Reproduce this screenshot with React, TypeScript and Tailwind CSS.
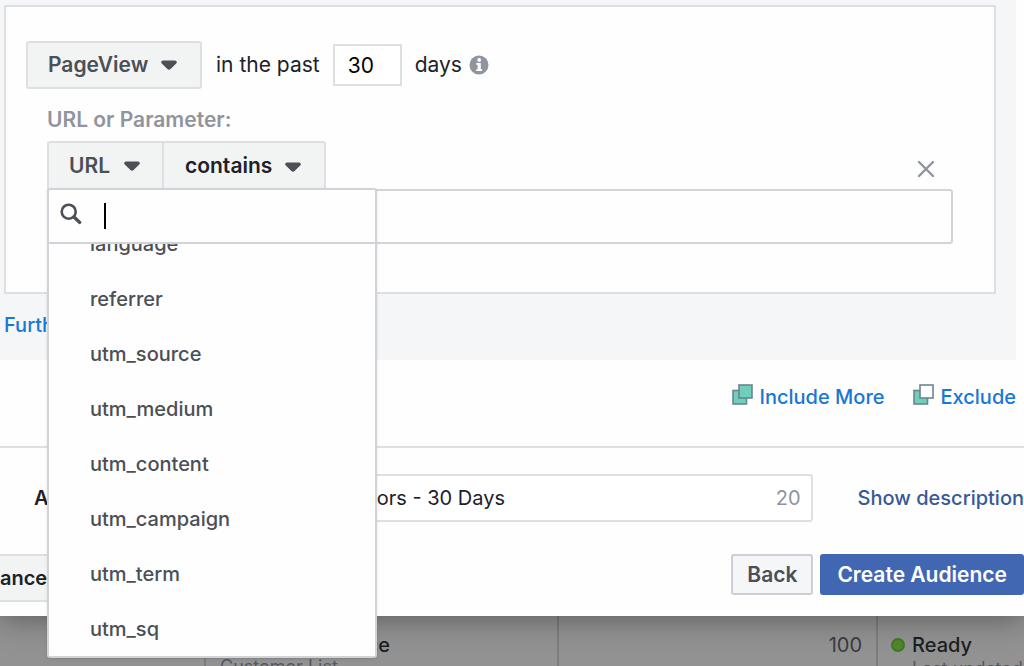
import { useState } from 'react';

const parameters = [
  'language',
  'referrer',
  'utm_source',
  'utm_medium',
  'utm_content',
  'utm_campaign',
  'utm_term',
  'utm_sq',
];

function Caret() {
  return (
    <svg className="h-[10px] w-[16px] shrink-0" viewBox="0 0 16 10" aria-hidden="true">
      <path
        d="M2 0.5h12c1.7 0 2.3 1.8 1.2 3L9.6 9c-.9.9-2.3.9-3.2 0L.8 3.5C-.3 2.3.3.5 2 .5z"
        fill="#4b4f56"
      />
    </svg>
  );
}

function InfoIcon() {
  return (
    <svg className="h-5 w-5" viewBox="0 0 20 20" aria-hidden="true">
      <circle cx="10" cy="10" r="9.5" fill="#90949c" />
      <circle cx="10.2" cy="5" r="1.9" fill="#fff" />
      <path d="M7.2 8h4.6v6.2h1.4V16H7.2v-1.8h1.4V9.8H7.2z" fill="#fff" />
    </svg>
  );
}

function SearchIcon() {
  return (
    <svg className="h-[22px] w-[22px] shrink-0" viewBox="0 0 22 22" fill="none" stroke="#4b4f56" aria-hidden="true">
      <circle cx="8.7" cy="8.7" r="7" strokeWidth="2.6" />
      <path d="M14 14l5.6 5.4" strokeWidth="3.4" strokeLinecap="round" />
    </svg>
  );
}

function SquaresIcon({ front }: { front: string }) {
  return (
    <svg className="mb-1.5 h-[21px] w-[21px]" viewBox="0 0 21 21" stroke="#6b8592" strokeWidth="1.6" aria-hidden="true">
      <rect x="1" y="6.5" width="13.5" height="13.5" fill="#6fcfbb" />
      <rect x="7" y="1" width="13" height="13" fill={front} />
    </svg>
  );
}

function ParameterMenu() {
  const [query, setQuery] = useState('');
  const items = parameters.filter((name) => name.includes(query));

  return (
    <div className="absolute top-full left-0 z-10 -mt-px w-[330px] rounded-[3px] border-2 border-[#d0d3d8] bg-[#fefefe] shadow-sm">
      <label className="flex h-[54px] items-center border-b-2 border-[#d0d3d8] pl-[11px]">
        <span className="mb-1">
          <SearchIcon />
        </span>
        <span className="ml-[22px] h-[26px] w-[2px] bg-black" />
        <input
          type="text"
          aria-label="Search parameters"
          value={query}
          onChange={(e) => setQuery(e.target.value)}
          className="min-w-0 flex-1 bg-transparent caret-transparent outline-none"
        />
      </label>
      <ul
        role="listbox"
        aria-label="Parameters"
        className="flex h-[412px] flex-col justify-end overflow-hidden text-[20px] font-medium text-[#4b4f56]"
      >
        {items.map((name) => (
          <li
            key={name}
            role="option"
            aria-selected={false}
            className="flex h-[55px] shrink-0 items-center pl-[41px]"
          >
            {name}
          </li>
        ))}
      </ul>
    </div>
  );
}

function RuleCard() {
  return (
    <div className="mr-5 ml-1 border-2 border-[#dddfe2] bg-[#fefefe] pt-[34px] pr-[41px] pb-[48px] pl-5">
      <div className="flex items-center">
        <div className="relative flex items-center">
          <select
            aria-label="Event"
            className="h-12 w-[176px] appearance-none rounded-[3px] border-2 border-[#dddfe2] bg-[#f2f3f3] pl-5 font-semibold text-[#4b4f56]"
          >
            <option>PageView</option>
          </select>
          <span className="pointer-events-none absolute right-[25px]">
            <Caret />
          </span>
        </div>
        <label htmlFor="days" className="ml-[14px]">
          in the past
        </label>
        <input
          id="days"
          type="text"
          defaultValue="30"
          className="ml-[13px] h-[42px] w-[69px] border-2 border-[#dddfe2] bg-white pl-[13px] text-black"
        />
        <span className="mr-[7px] ml-[13px]">days</span>
        <InfoIcon />
      </div>

      <div className="mt-4 ml-[21px]">
        <label htmlFor="rule-value" className="block leading-[30px] font-semibold text-[#90949c]">
          URL or Parameter:
        </label>
        <div className="mt-[6px] flex items-center justify-between">
          <div className="relative flex">
            <button
              type="button"
              aria-haspopup="listbox"
              aria-expanded="true"
              className="flex h-[48px] w-[117px] items-center justify-between rounded-tl-[3px] border-2 border-b-0 border-[#dddfe2] bg-[#f2f3f3] pr-[22px] pl-5 font-semibold text-[#4b4f56]"
            >
              URL
              <Caret />
            </button>
            <div className="relative flex items-center">
              <select
                aria-label="Operator"
                className="h-[48px] w-[162px] appearance-none rounded-tr-[3px] border-2 border-b-0 border-l-0 border-[#dddfe2] bg-[#f2f3f3] pl-[21px] font-semibold text-[#1d2129]"
              >
                <option>contains</option>
              </select>
              <span className="pointer-events-none absolute right-[25px] pt-1">
                <Caret />
              </span>
            </div>
            <ParameterMenu />
          </div>
          <button type="button" aria-label="Remove rule" className="mt-2 mr-[18px]">
            <svg className="h-[18px] w-[18px]" viewBox="0 0 18 18" fill="none" stroke="#90949c" strokeWidth="2.4">
              <path d="M2 2l14 14M16 2l-14 14" strokeLinecap="round" />
            </svg>
          </button>
        </div>
        <input
          id="rule-value"
          type="text"
          className="block h-[55px] w-full rounded-[3px] border-2 border-[#d3d4d7] bg-transparent px-3"
        />
      </div>
    </div>
  );
}

function AudienceTable() {
  return (
    <table className="w-full table-fixed text-[20px] text-[#1c1e22]">
      <colgroup>
        <col className="w-[205px]" />
        <col className="w-[353px]" />
        <col className="w-[319px]" />
        <col />
      </colgroup>
      <tbody>
        <tr className="align-top">
          <td className="border-r-2 border-[#7d7d7d]" />
          <td className="border-r-2 border-[#7d7d7d] pt-[14px] pl-[14px]">
            <div className="font-medium">Custom Audience</div>
            <div className="-mt-2 text-[18px] text-[#55585c]">Customer List</div>
          </td>
          <td className="border-r-2 border-[#7d7d7d] pt-[14px] pr-[14px] text-right text-[#3a3c40]">100</td>
          <td className="pt-[14px] pl-[13px]">
            <div className="flex items-center gap-[7px] font-medium">
              <span className="h-[14px] w-[14px] rounded-full border-2 border-[#3f7a22] bg-[#55852f]" />
              Ready
            </div>
            <div className="-mt-1.5 pl-[21px] text-[18px] text-[#55585c]">Last updated</div>
          </td>
        </tr>
      </tbody>
    </table>
  );
}

export default function App() {
  return (
    <div className="h-screen overflow-hidden bg-[#929292] font-['Inter','Liberation_Sans',sans-serif] text-[21px] leading-[30px] text-[#1d2129]">
      <main className="relative bg-[#fefefe] shadow-[0_4px_28px_rgba(0,0,0,0.35)]">
        <section className="mr-2 bg-[#f5f6f8] pt-[5px] pb-5">
          <RuleCard />
          <a href="#refine" className="mt-4 ml-1 inline-block text-[20px] font-medium text-[#1877d6]">
            Further refine by
          </a>
        </section>

        <div className="flex justify-end gap-7 pt-[22px] pr-2 pb-[34px] text-[20px] font-medium text-[#1877d6]">
          <button type="button" className="flex items-center gap-[7px]">
            <SquaresIcon front="#6fcfbb" />
            Include More
          </button>
          <button type="button" className="flex items-center gap-[7px]">
            <SquaresIcon front="#ffffff" />
            Exclude
          </button>
        </div>

        <div className="flex items-center border-t-2 border-[#dddfe2] pt-[26px]">
          <label htmlFor="audience-name" className="w-[190px] pl-[34px] text-[20px] font-semibold whitespace-nowrap">
            Audience name
          </label>
          <div className="relative flex min-w-0 flex-1 items-center text-[20px]">
            <input
              id="audience-name"
              type="text"
              defaultValue="Website page visitors - 30 Days"
              className="h-12 w-full rounded-[3px] border-2 border-[#dddfe2] bg-white pr-14 pl-3"
            />
            <span className="absolute right-3 text-[#90949c]">20</span>
          </div>
          <a href="#description" className="ml-[45px] shrink-0 text-[20px] font-medium text-[#385898]">
            Show description
          </a>
        </div>

        <div className="flex items-start justify-between pt-8 pb-[14px]">
          <button
            type="button"
            className="h-12 w-[70px] border-y-2 border-[#dddfe2] bg-[#f2f3f3] text-left text-[20px] font-semibold"
          >
            ance
          </button>
          <div className="flex gap-[7px]">
            <button
              type="button"
              className="h-[41px] rounded-[3px] border-2 border-[#ccd0d5] bg-[#f5f6f7] px-[14px] font-semibold text-[#4b4f56]"
            >
              Back
            </button>
            <button type="button" className="h-[41px] rounded-[3px] bg-[#4267b2] px-[17px] font-semibold text-white">
              Create Audience
            </button>
          </div>
        </div>
      </main>
      <AudienceTable />
    </div>
  );
}
